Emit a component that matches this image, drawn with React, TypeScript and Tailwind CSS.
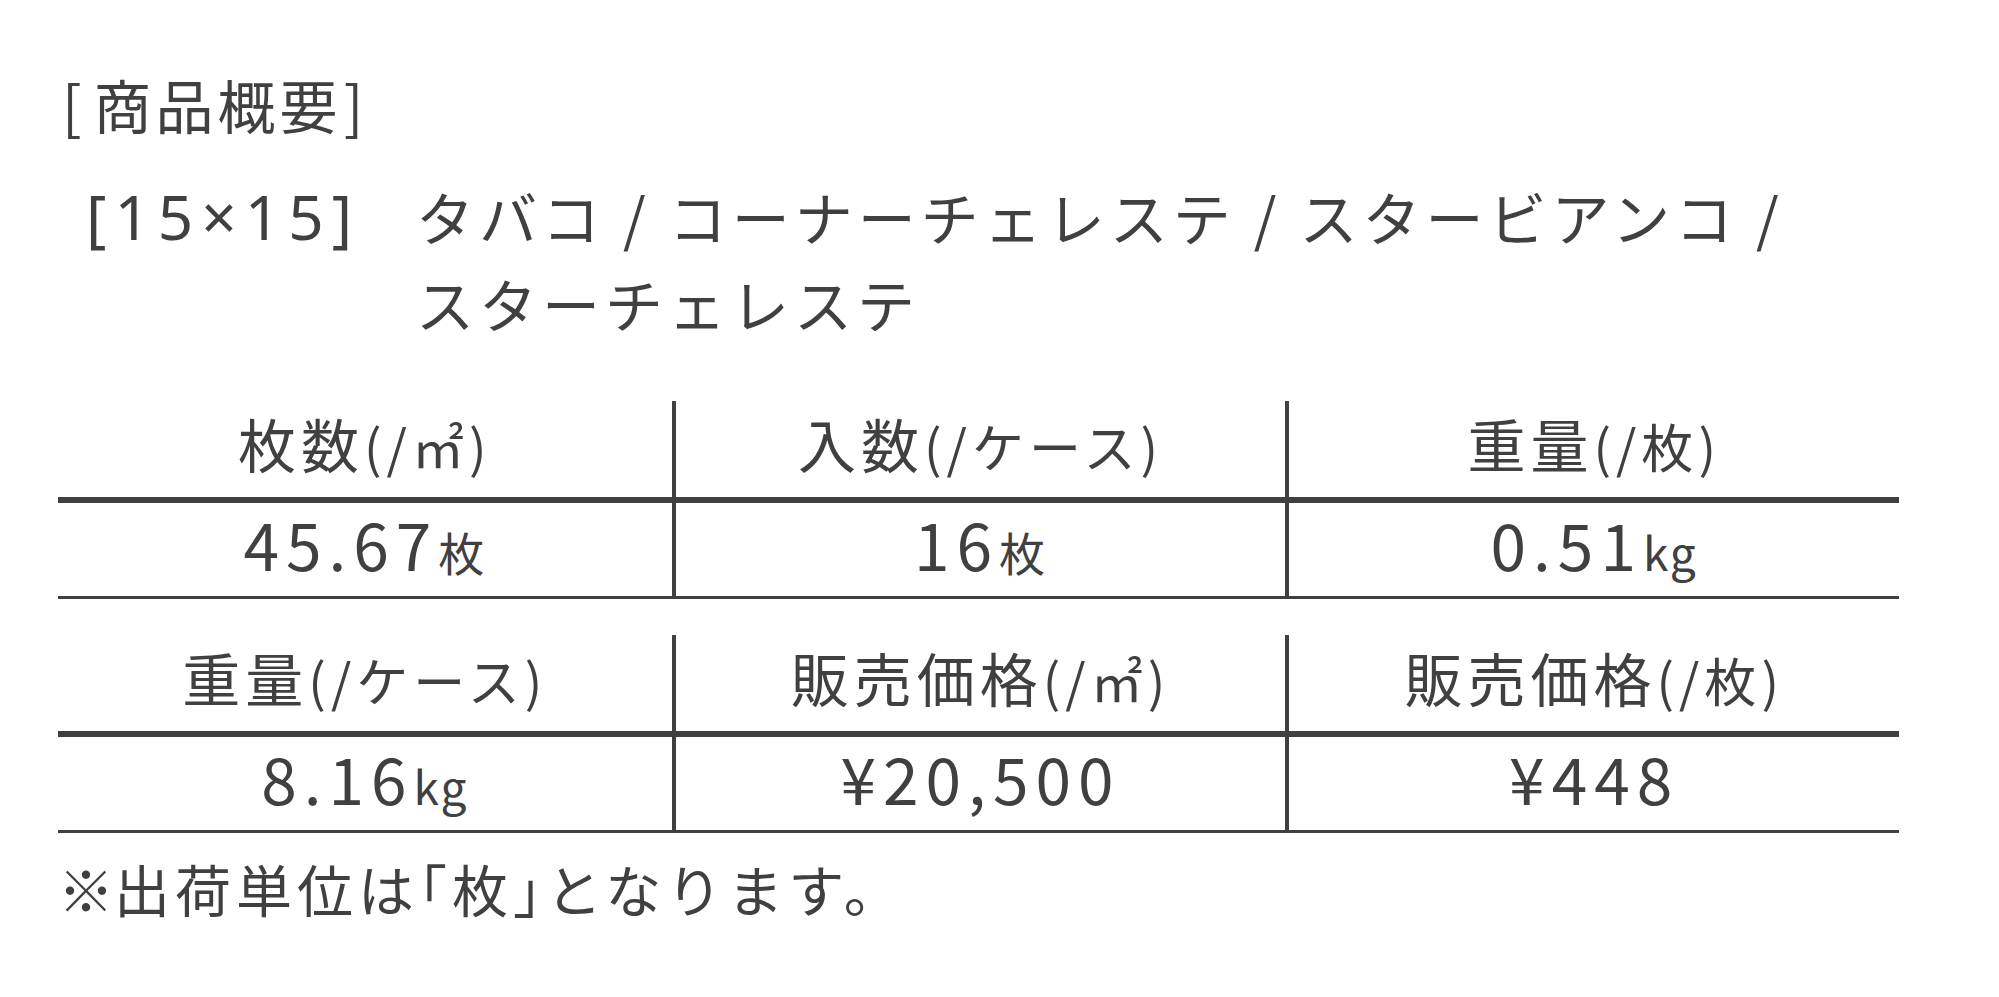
import React from 'react';

interface Spec {
  head: string;
  unit: string;
  value: string;
  suffix?: string;
}

const TABLES: Spec[][] = [
  [
    { head: '枚数', unit: '㎡', value: '45.67', suffix: '枚' },
    { head: '入数', unit: 'ケース', value: '16', suffix: '枚' },
    { head: '重量', unit: '枚', value: '0.51', suffix: 'kg' },
  ],
  [
    { head: '重量', unit: 'ケース', value: '8.16', suffix: 'kg' },
    { head: '販売価格', unit: '㎡', value: '¥20,500' },
    { head: '販売価格', unit: '枚', value: '¥448' },
  ],
];

function SpecTable({ specs }: { specs: Spec[] }) {
  return (
    <div className="grid grid-cols-3 w-[1841px]">
      {specs.map((s, i) => (
        <div
          key={`h${i}`}
          className={`h-[102px] pb-[12px] flex items-center justify-center border-b-[6px] border-[#404040] ${i > 0 ? 'border-l-[4px]' : ''}`}
        >
          <span className="text-[58px] leading-none tracking-[5px] whitespace-nowrap">
            {s.head}
            <span className="text-[52px] tracking-[5px]">(/{s.unit})</span>
          </span>
        </div>
      ))}
      {specs.map((s, i) => (
        <div
          key={`v${i}`}
          className={`h-[96px] pb-[14px] flex items-center justify-center border-b-[3px] border-[#404040] ${i > 0 ? 'border-l-[4px]' : ''}`}
        >
          <span className="text-[64px] leading-none tracking-[7px] whitespace-nowrap">
            {s.value}
            {s.suffix && <span className="text-[46px] tracking-[2px]">{s.suffix}</span>}
          </span>
        </div>
      ))}
    </div>
  );
}

export default function App() {
  return (
    <div className="min-h-screen w-[1999px] bg-white pl-[58px] pt-[75px] text-[#404040] font-['Noto_Sans_CJK_JP','Noto_Sans',sans-serif]">
      {/* 見出し */}
      <h2 className="text-[58px] leading-none tracking-[4px] font-normal pl-[4px]">
        <span className="mr-[8px]">[</span>商品概要<span className="ml-[2px]">]</span>
      </h2>

      {/* サイズ + 色名 */}
      <div className="mt-[40px] flex text-[58px] leading-[87px]">
        <div className="w-[330px] ml-[28px] shrink-0 whitespace-nowrap font-['Noto_Sans',sans-serif] text-[62px] tracking-[8px]">
          [15×15]
        </div>
        <div className="tracking-[5px] whitespace-nowrap">
          タバコ / コーナーチェレステ / スタービアンコ /
          <br />
          スターチェレステ
        </div>
      </div>

      <div className="mt-[54px] flex flex-col gap-[36px]">
        {TABLES.map((specs, i) => (
          <SpecTable key={i} specs={specs} />
        ))}
      </div>

      <p className="mt-[27px] text-[56px] leading-none tracking-[5px] whitespace-nowrap">
        <span className="tracking-[0px]">※</span>出荷単位は｢枚｣となります。
      </p>
    </div>
  );
}
